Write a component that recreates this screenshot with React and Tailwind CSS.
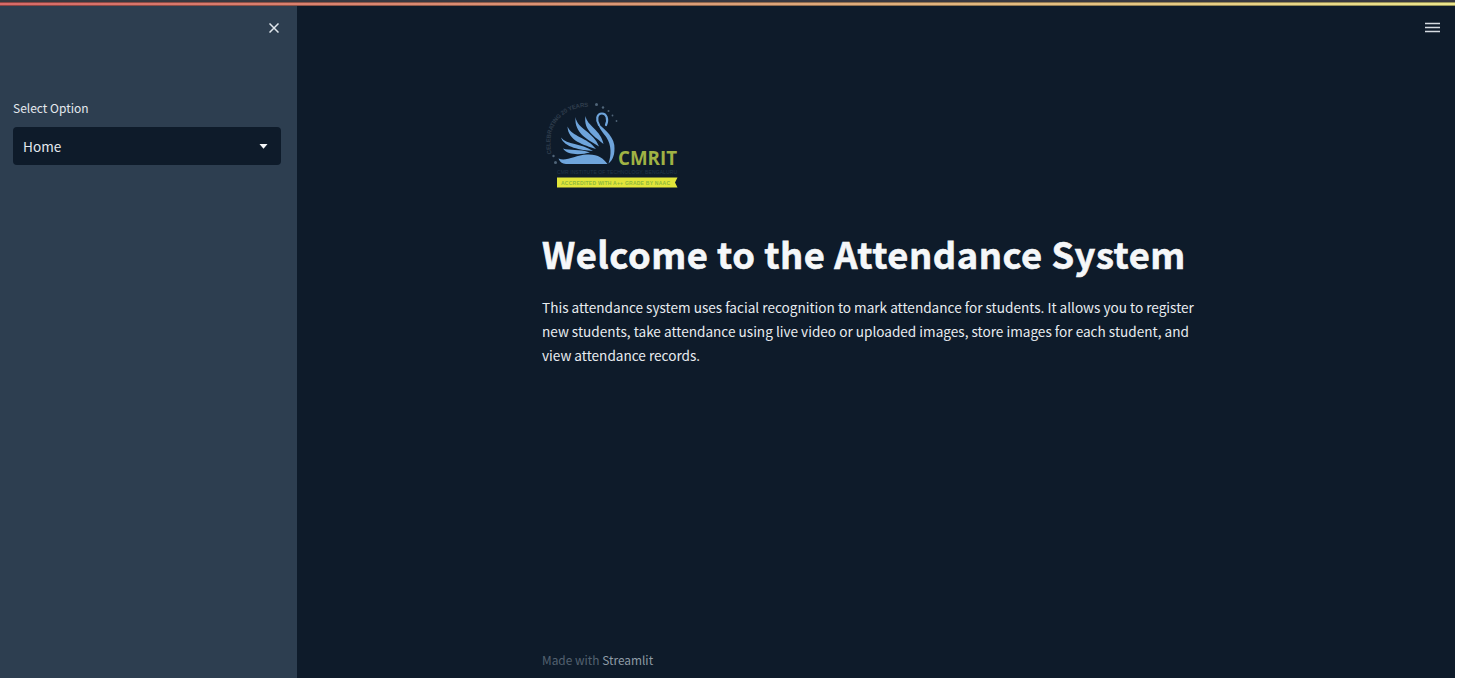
import React from "react";

function SwanLogo() {
  return (
    <svg width="150" height="100" viewBox="540 95 150 100" role="img" aria-label="CMRIT">
      <defs>
        <path id="logo-arc" d="M551.5 154 C546 128 560 105.500 592 107" />
      </defs>
      <text fontSize="6" fontWeight="700" fill="#303e4d" fontFamily="Liberation Sans, sans-serif">
        <textPath href="#logo-arc" textLength="70" lengthAdjust="spacing">CELEBRATING 20 YEARS</textPath>
      </text>
      <g fill="#4f6478">
        <circle cx="596.500" cy="104.500" r="1.500" />
        <circle cx="603" cy="107.500" r="1.200" />
        <circle cx="608.500" cy="111" r="1" />
        <circle cx="612.500" cy="115.500" r=".9" />
        <circle cx="616.500" cy="121" r=".9" />
        <circle cx="553.500" cy="156" r="1.200" />
        <circle cx="555.500" cy="162.500" r="1.500" />
      </g>
      <g fill="#6fa5dc">
        <path d="M558.500 158.500 C566 162 575 155 587 154.500 C598 154 603 158 607.500 164 L566 164 C562 163.500 560 162 558.500 158.500Z" />
        <path d="M563 148.500 C570 151 579 148.500 590 152.500 C582 154.500 568 156 563 148.500Z" />
        <path d="M561 137.500 C567 145 581 143 593 151 C581 150 564 147.500 561 137.500Z" />
        <path d="M567.500 126.500 C572 137 587 137 596 149 C584 145 568 141 567.500 126.500Z" />
        <path d="M575.500 117 C577 129 594 132 599 146.500 C589 140 574 134 575.500 117Z" />
        <path d="M585.500 116 C587 126 601 130 603.500 144 C596 137 583 131 585.500 116Z" />
      </g>
      <path d="M606 125 C608.500 119 606.500 113.500 602 113.500 C596.500 113.500 596 120.500 599 125" fill="none" stroke="#6fa5dc" strokeWidth="2.200" strokeLinecap="round" />
      <path d="M598 123 C602 128 612.500 134 614.300 145 C615.200 154 613 160 608.500 163.500 C611.500 155 611.500 145 606.500 137.500 C603.500 133 599 129 598 123Z" fill="#6fa5dc" />
      <text x="618" y="164.500" fontSize="19.500" fontWeight="700" fill="#a0b244" textLength="59" lengthAdjust="spacingAndGlyphs" fontFamily="Open Sans, sans-serif">CMRIT</text>
      <text x="557" y="174" fontSize="5" fill="#22364a" textLength="120" lengthAdjust="spacing" fontFamily="Liberation Sans, sans-serif">CMR INSTITUTE OF TECHNOLOGY, BENGALURU</text>
      <path d="M557 177.500 H677.500 L675 182.500 L677.500 187.500 H557Z" fill="#e2e63a" />
      <text x="561" y="184.700" fontSize="5" fontWeight="700" fill="#8fb93c" textLength="109" lengthAdjust="spacing" fontFamily="Liberation Sans, sans-serif">ACCREDITED WITH A++ GRADE BY NAAC</text>
    </svg>
  );
}

function Sidebar() {
  return (
    <aside className="flex w-[297px] shrink-0 flex-col bg-[#2d3e50] pl-[13px] pr-4">
      <button aria-label="Close sidebar" className="mt-[17px] mr-[2px] flex h-[10px] w-[10px] self-end">
        <svg width="10" height="10" viewBox="0 0 10 10" stroke="#e0e6ec" strokeWidth="1.500" fill="none">
          <path d="M0.500 0.500 9.500 9.500M9.500 0.500 0.500 9.500" />
        </svg>
      </button>
      <label className="mt-[65px] h-5 text-[12px] leading-5 whitespace-nowrap text-[#e4e9ee]">Select Option</label>
      <div className="mt-[9px] flex h-[38px] items-center justify-between rounded-[4px] bg-[#0e1b2a] pl-[10px] pr-[13px] text-[#e4e9ee]">
        <span className="text-[13.600px] leading-5">Home</span>
        <svg width="9" height="5" viewBox="0 0 9 5" fill="#f5f7f9">
          <path d="M0.500 0H8.500L4.500 4.700Z" />
        </svg>
      </div>
    </aside>
  );
}

export default function App() {
  return (
    <div className="h-[678px] w-[1458px] overflow-hidden bg-white font-['Noto_Sans_CJK_SC',sans-serif]">
      <div className="flex h-full w-[1455px] flex-col bg-[#0e1b2a]">
        <div className="h-[2px] shrink-0 bg-[#383840]" />
        <div className="h-1 shrink-0 border-y border-black/35 bg-linear-to-r from-[#d86a68] via-[#dca078] to-[#ece68c]" />
        <div className="flex min-h-0 flex-1">
          <Sidebar />
          <main className="flex min-w-0 flex-1 flex-col pl-[245px]">
            <div className="flex h-[89px] justify-end pt-[16px] pr-[15px]">
              <svg width="15" height="11" viewBox="0 0 15 11" stroke="#d5dbe1" strokeWidth="1.700">
                <path d="M0 1.500H15M0 5.500H15M0 9.500H15" />
              </svg>
            </div>
            <div className="-ml-[2px] h-[100px]"><SwanLogo /></div>
            <h1 className="mt-[33px] h-[50px] text-[36.300px] leading-[50px] font-bold tracking-[0.530px] whitespace-nowrap text-[#f5f7f9] [-webkit-text-stroke:0.600px_#f5f7f9]">Welcome to the Attendance System</h1>
            <p className="mt-[17px] text-[13.600px] leading-[24.200px] whitespace-nowrap text-[#e8ecf0]">
              This attendance system uses facial recognition to mark attendance for students. It allows you to register<br />new students, take attendance using live video or uploaded images, store images for each student, and<br />view attendance records.
            </p>
            <footer className="mt-auto mb-2 h-5 text-[11.900px] leading-5 text-[#536170]">
              Made with <span className="text-[#8f9ba6]">Streamlit</span>
            </footer>
          </main>
        </div>
      </div>
    </div>
  );
}
